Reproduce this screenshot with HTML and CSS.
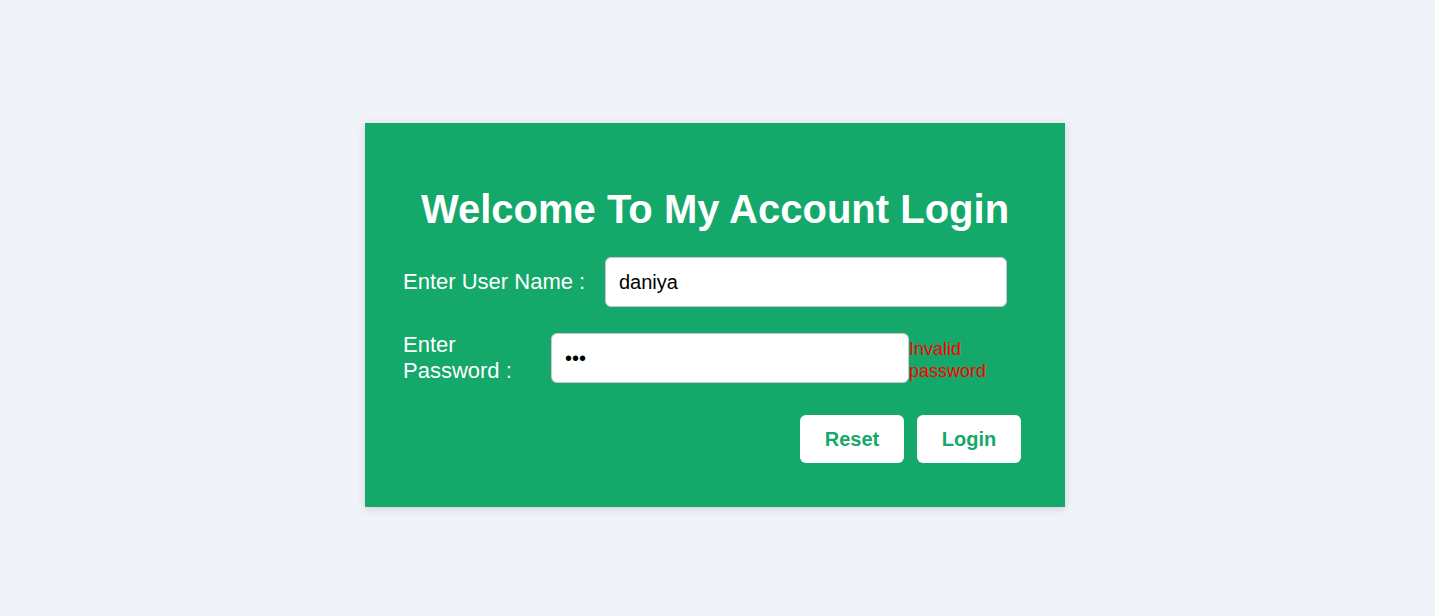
FILE: index.html
```html
<!DOCTYPE html>
<html>
<head>
<meta charset="utf-8">
<link rel="stylesheet" href="styles.css">
</head>
<body>
<div class="page">
  <form class="card">
    <h1 class="title">Welcome To My Account Login</h1>
    <div class="row row-user">
      <label class="label label-user">Enter User Name :</label>
      <input class="field field-user" type="text" value="daniya">
    </div>
    <div class="row row-pass">
      <label class="label label-pass">Enter Password :</label>
      <input class="field field-pass" type="password" value="abc">
      <span class="error">Invalid password</span>
    </div>
    <div class="actions">
      <button type="button" class="btn">Reset</button>
      <button type="button" class="btn">Login</button>
    </div>
  </form>
</div>
</body>
</html>
```

FILE: styles.css
```css
* { box-sizing: border-box; }
html, body { margin: 0; padding: 0; }
body {
  background: #f0f4f8;
  font-family: "Liberation Sans", Arial, sans-serif;
  width: 1435px;
  height: 616px;
  overflow: hidden;
}
.page {
  display: flex;
  justify-content: center;
  padding-top: 123px;
  padding-right: 5px;
}
.card {
  width: 700px;
  height: 384px;
  background: #14a86a;
  box-shadow: 0 2px 8px rgba(0,0,0,0.15);
  padding: 60px 44px 0 38px;
  display: flex;
  flex-direction: column;
}
.title {
  margin: 0 0 22px 0;
  color: #fff;
  font-size: 40px;
  font-weight: bold;
  text-align: center;
  line-height: 52px;
  padding-left: 6px;
}
.row {
  display: flex;
  align-items: center;
}
.label {
  color: #fff;
  font-size: 22px;
  line-height: 26px;
}
.label-user { width: 202px; }
.label-pass { width: 148px; }
.field {
  height: 50px;
  border: 1px solid #c8c8c8;
  border-radius: 6px;
  background: #fff;
  font-family: "Liberation Sans", Arial, sans-serif;
  font-size: 20px;
  padding: 0 13px;
  color: #000;
  outline: none;
}
.field-user { width: 402px; }
.field-pass { width: 358px; }
.row-pass { margin-top: 25px; }
.error {
  color: #ff0000;
  font-size: 18px;
  line-height: 22px;
  width: 90px;
  margin-top: 4px;
}
.actions {
  display: flex;
  justify-content: flex-end;
  gap: 13px;
  margin-top: 31px;
}
.btn {
  width: 104px;
  height: 48px;
  background: #fff;
  border: none;
  border-radius: 6px;
  color: #14a86a;
  font-family: "Liberation Sans", Arial, sans-serif;
  font-size: 20px;
  font-weight: bold;
  cursor: pointer;
}
```
